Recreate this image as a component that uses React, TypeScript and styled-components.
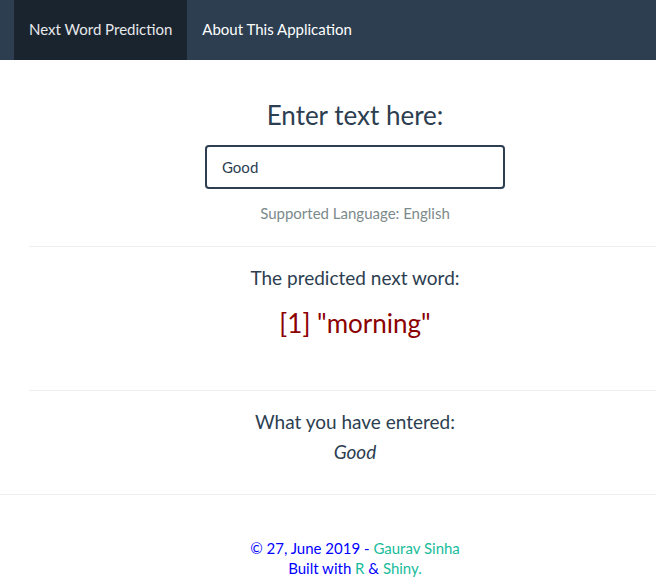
import React from "react";
import styled, { createGlobalStyle } from "styled-components";

const Global = createGlobalStyle`
  html, body { margin: 0; padding: 0; overflow-x: hidden; background: #fff; }
  body {
    font-family: Lato, "Helvetica Neue", Helvetica, Arial, sans-serif;
    font-size: 15px;
    line-height: 1.42857;
    color: #2c3e50;
  }
  * { box-sizing: border-box; }
`;

const Navbar = styled.nav`
  height: 60px;
  background: #2c3e50;
  display: flex;
  align-items: stretch;
  padding-left: 14px;
`;

const NavTab = styled.a<{ $active?: boolean }>`
  display: flex;
  align-items: center;
  padding: 0 15px;
  font-size: 15px;
  color: ${(p) => (p.$active ? "#e6e8ea" : "#ffffff")};
  background: ${(p) => (p.$active ? "#1a242f" : "transparent")};
  text-decoration: none;
  cursor: pointer;
`;

const Main = styled.main`
  margin-left: 29px;
  width: 652px;
  text-align: center;
`;

const Section = styled.section<{ $pt: number; $pb: number }>`
  padding-top: ${(p) => p.$pt}px;
  padding-bottom: ${(p) => p.$pb}px;
  display: flex;
  flex-direction: column;
  align-items: center;
`;

const Rule = styled.hr<{ $full?: boolean }>`
  margin: 0;
  border: 0;
  border-top: 1px solid #ecf0f1;
  ${(p) => (p.$full ? "margin-left: -29px; width: 656px;" : "")}
`;

const Title = styled.h3`
  margin: 0 0 15px;
  font-size: 26px;
  font-weight: 400;
  line-height: 30px;
`;

const Subtitle = styled.h4<{ $mb: number }>`
  margin: 0 0 ${(p) => p.$mb}px;
  font-size: 19px;
  font-weight: 400;
  line-height: 24px;
`;

const Prediction = styled.h3`
  margin: 0;
  font-size: 26px;
  font-weight: 400;
  line-height: 30px;
  color: #8b0000;
`;

const Entered = styled.em`
  font-size: 19px;
  line-height: 24px;
`;

const TextInput = styled.input`
  width: 300px;
  height: 44px;
  padding: 10px 15px;
  border: 2px solid #2c3e50;
  border-radius: 4px;
  font-family: inherit;
  font-size: 15px;
  color: #2c3e50;
  outline: none;
`;

const Hint = styled.p`
  margin: 14px 0 0;
  font-size: 15px;
  line-height: 21px;
  color: #7b8a8b;
`;

const Footer = styled.footer`
  padding-top: 43px;
  font-size: 15px;
  line-height: 20px;
  color: #0000ff;
  display: flex;
  flex-direction: column;
  align-items: center;
`;

const Link = styled.a`
  color: #18bc9c;
  text-decoration: none;
`;

export default function App() {
  const [text, setText] = React.useState("Good");
  return (
    <>
      <Global />
      <Navbar>
        <NavTab $active>Next Word Prediction</NavTab>
        <NavTab>About This Application</NavTab>
      </Navbar>
      <Main>
        <Section $pt={40} $pb={22}>
          <Title>Enter text here:</Title>
          <TextInput value={text} onChange={(e) => setText(e.target.value)} />
          <Hint>Supported Language: English</Hint>
        </Section>
        <Rule />
        <Section $pt={19} $pb={52}>
          <Subtitle $mb={18}>The predicted next word:</Subtitle>
          <Prediction>[1] "morning"</Prediction>
        </Section>
        <Rule />
        <Section $pt={19} $pb={30}>
          <Subtitle $mb={6}>What you have entered:</Subtitle>
          <Entered>{text}</Entered>
        </Section>
        <Rule $full />
        <Footer>
          <span>
            © 27, June 2019 - <Link>Gaurav Sinha</Link>
          </span>
          <span>
            Built with <Link>R</Link> &amp; <Link>Shiny.</Link>
          </span>
        </Footer>
      </Main>
    </>
  );
}
